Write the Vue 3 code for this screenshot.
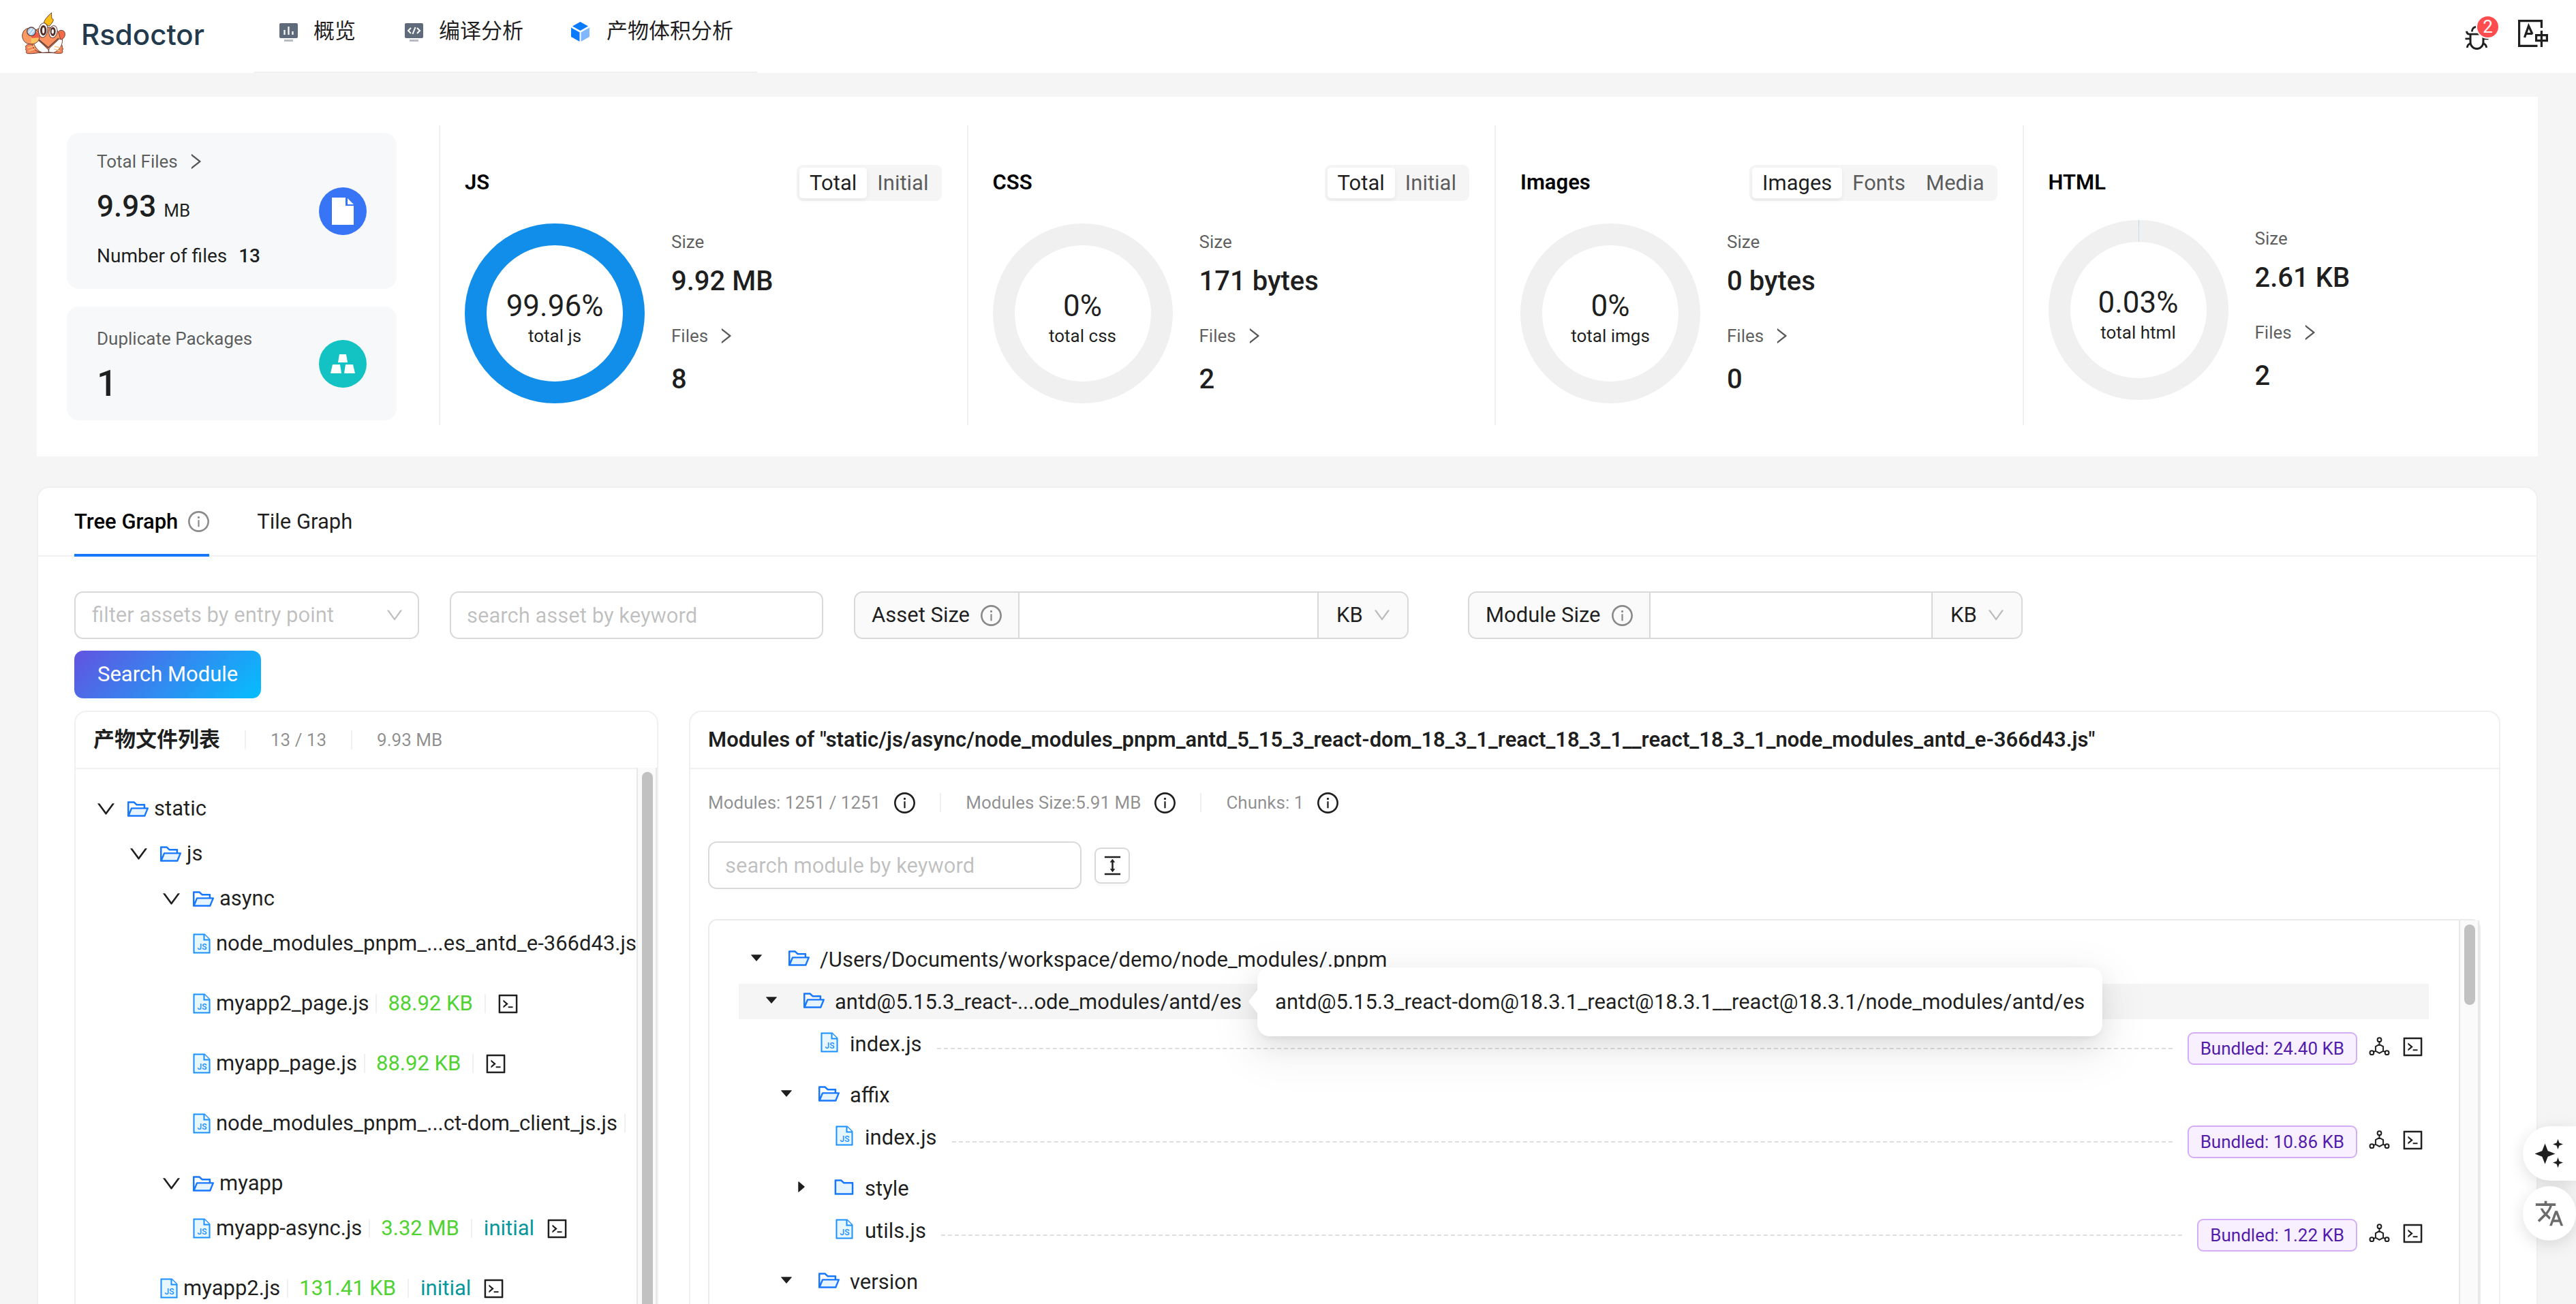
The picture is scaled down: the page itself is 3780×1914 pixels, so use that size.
<script setup>
import { h, ref } from 'vue'

const iconPaths = {
  down: ['M884 256h-75c-5.1 0-9.9 2.5-12.9 6.6L512 654.2 227.9 262.6c-3-4.1-7.8-6.6-12.9-6.6h-75c-6.5 0-10.3 7.4-6.5 12.7l352.6 486.1c12.8 17.6 39 17.6 51.7 0l352.6-486.1c3.9-5.3.1-12.7-6.4-12.7z'],
  right: ['M765.7 486.8L314.9 134.7A7.97 7.97 0 00302 141v77.3c0 4.9 2.3 9.6 6.1 12.6l360 281.1-360 281.1c-3.9 3-6.1 7.7-6.1 12.6V883c0 6.7 7.7 10.4 12.9 6.3l450.8-352.1a31.96 31.96 0 000-50.4z'],
  info: [
    'M512 64C264.6 64 64 264.6 64 512s200.6 448 448 448 448-200.6 448-448S759.4 64 512 64zm0 820c-205.4 0-372-166.6-372-372s166.6-372 372-372 372 166.6 372 372-166.6 372-372 372z',
    'M464 336a48 48 0 1096 0 48 48 0 10-96 0zm72 112h-48c-4.4 0-8 3.6-8 8v272c0 4.4 3.6 8 8 8h48c4.4 0 8-3.6 8-8V456c0-4.4-3.6-8-8-8z'
  ],
  caretDown: ['M840.4 300H183.6c-19.7 0-30.7 20.8-18.5 35l328.4 380.8c9.4 10.9 27.5 10.9 37 0L858.9 335c12.2-14.2 1.2-35-18.5-35z'],
  caretRight: ['M715.8 493.5L335 165.1c-14.2-12.2-35-1.2-35 18.5v656.8c0 19.7 20.8 30.7 35 18.5l380.8-328.4c10.9-9.4 10.9-27.6 0-37z'],
  code: ['M516 673c0 4.4 3.4 8 7.5 8h185c4.1 0 7.5-3.6 7.5-8v-48c0-4.4-3.4-8-7.5-8h-185c-4.1 0-7.5 3.6-7.5 8v48zm-194.9 6.1l192-161c3.8-3.2 3.8-9.1 0-12.3l-192-160.9A7.95 7.95 0 00308 351v62.7c0 2.4 1 4.6 2.9 6.1L420.7 512l-109.8 92.2a8.1 8.1 0 00-2.9 6.1V673c0 6.8 7.9 10.5 13.1 6.1zM880 112H144c-17.7 0-32 14.3-32 32v736c0 17.7 14.3 32 32 32h736c17.7 0 32-14.3 32-32V144c0-17.7-14.3-32-32-32zm-40 728H184V184h656v656z'],
  columnHeight: ['M840 836H184c-4.4 0-8 3.6-8 8v60c0 4.4 3.6 8 8 8h656c4.4 0 8-3.6 8-8v-60c0-4.4-3.6-8-8-8zm0-724H184c-4.4 0-8 3.6-8 8v60c0 4.4 3.6 8 8 8h656c4.4 0 8-3.6 8-8v-60c0-4.4-3.6-8-8-8zM610.8 378c6 0 9.4-7 5.7-11.7L515.7 238.7a7.14 7.14 0 00-11.3 0L403.6 366.3a7.23 7.23 0 005.7 11.7H476v268h-62.8c-6 0-9.4 7-5.7 11.7l100.8 127.5c2.9 3.7 8.5 3.7 11.3 0l100.8-127.5c3.7-4.7.4-11.7-5.7-11.7H548V378h62.8z'],
  bug: [
    'M304 280h56c4.4 0 8-3.6 8-8 0-28.3 5.9-53.2 17.1-73.5 10.6-19.4 26-34.8 45.4-45.4C450.9 142 475.7 136 504 136h16c28.3 0 53.2 5.9 73.5 17.1 19.4 10.6 34.8 26 45.4 45.4C650 218.9 656 243.7 656 272c0 4.4 3.6 8 8 8h56c4.4 0 8-3.6 8-8 0-40-8.8-76.7-25.9-108.1a184.31 184.31 0 00-74-74C596.7 72.8 560 64 520 64h-16c-40 0-76.7 8.8-108.1 25.9a184.31 184.31 0 00-74 74C304.8 195.3 296 232 296 272c0 4.4 3.6 8 8 8z',
    'M940 512H792V412c76.8 0 139-62.2 139-139 0-4.4-3.6-8-8-8h-60c-4.4 0-8 3.6-8 8a63 63 0 01-63 63H232a63 63 0 01-63-63c0-4.4-3.6-8-8-8h-60c-4.4 0-8 3.6-8 8 0 76.8 62.2 139 139 139v100H84c-4.4 0-8 3.6-8 8v56c0 4.4 3.6 8 8 8h148v96c0 6.5.2 13 .7 19.3C164.1 728.6 116 796.7 116 876c0 4.4 3.6 8 8 8h56c4.4 0 8-3.6 8-8 0-44.2 23.9-82.9 59.6-103.7a273 273 0 0022.7 49c24.3 41.5 59 76.2 100.5 100.5S460.5 960 512 960s99.8-13.9 141.3-38.2a281.38 281.38 0 00123.2-149.5A120 120 0 01836 876c0 4.4 3.6 8 8 8h56c4.4 0 8-3.6 8-8 0-79.3-48.1-147.4-116.7-176.7.4-6.4.7-12.8.7-19.3v-96h148c4.4 0 8-3.6 8-8v-56c0-4.4-3.6-8-8-8zM716 680c0 36.8-9.7 72-27.8 102.9-17.7 30.3-43 55.6-73.3 73.3C584 874.3 548.8 884 512 884s-72-9.7-102.9-27.8c-30.3-17.7-55.6-43-73.3-73.3A202.75 202.75 0 01308 680V412h408v268z'
  ]
}

const Icon = (props) =>
  h(
    'svg',
    { viewBox: '64 64 896 896', width: props.size, height: props.size, fill: 'currentColor', 'aria-hidden': 'true', style: { display: 'block', flex: 'none' } },
    iconPaths[props.name].map((d) => h('path', { d }))
  )
Icon.props = ['name', 'size']

const FolderIcon = (props) =>
  h(
    'svg',
    { viewBox: '64 64 896 896', width: 31, height: 31, 'aria-hidden': 'true', style: { display: 'block', flex: 'none' } },
    props.open
      ? [
          h('path', { fill: '#e6f4ff', d: 'M159 768h612.3l103.4-256H262.3z' }),
          h('path', { fill: '#1677ff', d: 'M928 444H820V330.4c0-17.7-14.3-32-32-32H473L355.7 186.2a8.15 8.15 0 00-5.5-2.2H96c-17.7 0-32 14.3-32 32v592c0 17.7 14.3 32 32 32h698c13 0 24.8-7.9 29.7-20l134-332c1.5-3.8 2.3-7.9 2.3-12 0-17.7-14.3-32-32-32zM136 256h188.5l119.6 114.4H748V444H238c-13 0-24.8 7.9-29.7 20L136 643.2V256zm635.3 512H159l103.4-256h612.4L771.3 768z' })
        ]
      : [
          h('path', { fill: '#e6f4ff', d: 'M372.5 256H184v512h656V370.4H492.1z' }),
          h('path', { fill: '#1677ff', d: 'M880 298.4H521L403.7 186.2a8.15 8.15 0 00-5.5-2.2H144c-17.7 0-32 14.3-32 32v592c0 17.7 14.3 32 32 32h736c17.7 0 32-14.3 32-32V330.4c0-17.7-14.3-32-32-32zM840 768H184V256h188.5l119.6 114.4H840V768z' })
        ]
  )
FolderIcon.props = ['open']

const JsIcon = () =>
  h('svg', { viewBox: '0 0 26 30', width: 26, height: 30, 'aria-hidden': 'true', style: { display: 'block', flex: 'none' } }, [
    h('path', { d: 'M1.5 1.5h15.5l7.5 7.5v19.5h-23z', fill: '#e6f7ff', stroke: '#1890ff', 'stroke-width': 2 }),
    h('path', { d: 'M16.5 1.5v8h8', fill: '#fff', stroke: '#1890ff', 'stroke-width': 2 }),
    h('text', { x: 13.5, y: 24, 'text-anchor': 'middle', 'font-size': 12, 'font-weight': 500, 'font-family': 'Roboto, sans-serif', fill: '#1890ff' }, 'JS')
  ])

const ModuleIcon = () =>
  h('svg', { viewBox: '0 0 31 31', width: 31, height: 31, fill: 'none', stroke: 'currentColor', 'stroke-width': 2, 'aria-hidden': 'true', style: { display: 'block', flex: 'none' } }, [
    h('path', { d: 'M15.5 12l5.6 3.2v6.4l-5.6 3.2-5.6-3.2v-6.4zM15.5 12V8M9.9 21.6l-3.2 1.6M21.1 21.6l3.2 1.6' }),
    h('circle', { cx: 15.5, cy: 5.2, r: 2.9 }),
    h('circle', { cx: 4.4, cy: 24.2, r: 2.9 }),
    h('circle', { cx: 26.6, cy: 24.2, r: 2.9 })
  ])

const stats = ref([
  { title: 'JS', tabs: ['Total', 'Initial'], active: 'Total', percent: 99.96, label: 'total js', size: '9.92 MB', files: 8 },
  { title: 'CSS', tabs: ['Total', 'Initial'], active: 'Total', percent: 0, label: 'total css', size: '171 bytes', files: 2 },
  { title: 'Images', tabs: ['Images', 'Fonts', 'Media'], active: 'Images', percent: 0, label: 'total imgs', size: '0 bytes', files: 0 },
  { title: 'HTML', tabs: [], active: '', percent: 0.03, label: 'total html', size: '2.61 KB', files: 2 }
])

const sizeFilters = [
  { id: 'asset-size', label: 'Asset Size' },
  { id: 'module-size', label: 'Module Size' }
]

const assets = [
  { level: 0, name: 'static', folder: true },
  { level: 1, name: 'js', folder: true },
  { level: 2, name: 'async', folder: true },
  { level: 2, name: 'node_modules_pnpm_...es_antd_e-366d43.js' },
  { level: 2, name: 'myapp2_page.js', size: '88.92 KB' },
  { level: 2, name: 'myapp_page.js', size: '88.92 KB' },
  { level: 2, name: 'node_modules_pnpm_...ct-dom_client_js.js', cut: true },
  { level: 2, name: 'myapp', folder: true },
  { level: 2, name: 'myapp-async.js', size: '3.32 MB', initial: true },
  { level: 1, name: 'myapp2.js', size: '131.41 KB', initial: true }
]

const modules = [
  { level: 0, name: '/Users/Documents/workspace/demo/node_modules/.pnpm', folder: true, open: true },
  { level: 1, name: 'antd@5.15.3_react-...ode_modules/antd/es', folder: true, open: true, hover: true, tip: 'antd@5.15.3_react-dom@18.3.1_react@18.3.1__react@18.3.1/node_modules/antd/es' },
  { level: 2, name: 'index.js', size: '24.40 KB' },
  { level: 2, name: 'affix', folder: true, open: true },
  { level: 3, name: 'index.js', size: '10.86 KB' },
  { level: 3, name: 'style', folder: true, open: false },
  { level: 3, name: 'utils.js', size: '1.22 KB' },
  { level: 2, name: 'version', folder: true, open: true }
]

const circumference = 2 * Math.PI * 116
const arc = (p) => `${(circumference * p) / 100} ${circumference}`
</script>

<template>
  <div class="page">
    <header class="topbar">
      <a class="brand" href="#">
        <svg class="crab" viewBox="30 20 204 195" width="68" height="65" aria-hidden="true">
          <g stroke="#6b4038" stroke-width="3" stroke-linejoin="round">
            <path d="M66 166c-12 3-17 14-11 17-5 5-2 11 3 12-6 6-2 13 4 13 22 2 42-4 60-4h40c15 0 34 6 50 2 5-2 5-8 1-12 5-3 6-9 1-13 4-6-3-14-12-16z" fill="#f58458" />
            <path d="M133 76c0-14 14-30 34-48-1 13 0 22 2 27 4 1 7 2 6 5-1 10-12 18-17 27z" fill="#fbbf16" />
            <path d="M85 120c10-28 75-42 110-10 22 22 18 64-6 86-24 12-76 10-92-2-20-18-22-50-12-74z" fill="#f9905d" />
            <path d="M88 162c8 22 22 36 38 42l30-2-4-12-42-40zM214 144c4 26-14 52-38 60l-22-2 2-16 44-42z" fill="#fff" />
            <path d="M102 140l50 42 46-42" fill="none" stroke-width="5" />
            <ellipse cx="130" cy="105" rx="20" ry="32" fill="#fff" transform="rotate(8 130 105)" />
            <ellipse cx="131" cy="106" rx="14" ry="23" fill="#57302b" stroke="none" />
            <ellipse cx="131" cy="106" rx="5" ry="13" fill="#fff" stroke="none" />
            <ellipse cx="174" cy="112" rx="18" ry="27" fill="#fff" transform="rotate(10 174 112)" />
            <ellipse cx="173" cy="111" rx="12" ry="20" fill="#57302b" stroke="none" />
            <ellipse cx="172" cy="111" rx="5" ry="10" fill="#fff" stroke="none" />
            <path d="M196 112c8-12 30-7 30 8 2 12-8 26-18 26-4-6-6-14-6-20z" fill="#f36c49" />
            <path d="M38 128c2-22 18-34 36-32 26 0 40 18 40 38s-16 32-38 32-38-14-38-38z" fill="#fa9a62" />
            <path d="M76 140l34-10c2 20-12 34-32 34z" fill="#fbc45f" stroke="none" />
            <path d="M78 132c4-16 22-24 32-12l4 18-34 2z" fill="#ee5d4a" stroke="none" />
            <circle cx="78" cy="111" r="19" fill="#a9d1f5" stroke-width="4" />
          </g>
          <path d="M66 116l14-18M74 124l18-22" stroke="#e6f4ff" stroke-width="5" />
          <path d="M62 182l30-8M66 197l28-10M206 182l-26-6M204 196l-26-8" stroke="#fcc98a" stroke-width="4" />
        </svg>
        <span class="wordmark">Rsdoctor</span>
      </a>
      <nav class="menu">
        <a class="menu-item" href="#">
          <svg viewBox="0 0 31 31" width="31" height="31" aria-hidden="true">
            <rect x="2" y="3" width="27" height="22" rx="2" fill="#5f6b7a" />
            <path d="M9.500 13v7M15.500 8v12M21.500 15v5" stroke="#fff" stroke-width="2.200" />
            <rect x="9" y="27" width="13" height="3" fill="#b6bbc2" />
          </svg>
          概览
        </a>
        <a class="menu-item" href="#">
          <svg viewBox="0 0 31 31" width="31" height="31" aria-hidden="true">
            <rect x="2" y="3" width="27" height="22" rx="2" fill="#5f6b7a" />
            <path d="M11 10l-4 4 4 4M20 10l4 4-4 4M17.500 9l-4 10" stroke="#fff" stroke-width="2" fill="none" />
            <rect x="9" y="27" width="13" height="3" fill="#b6bbc2" />
          </svg>
          编译分析
        </a>
        <a class="menu-item" href="#">
          <svg viewBox="0 0 31 31" width="31" height="31" aria-hidden="true">
            <path d="M13.500 1l11.500 6.500-11.500 6.500L2 7.500z" fill="#0a7bff" />
            <path d="M0 9.500l12.500 7V30L0 23z" fill="#0a7bff" />
            <path d="M27 9.500l-12.500 7V30L27 23z" fill="#80b8ff" />
          </svg>
          产物体积分析
        </a>
      </nav>
      <div class="tools">
        <button class="icon-btn bug" aria-label="Alerts">
          <Icon name="bug" size="35" />
          <span class="badge">2</span>
        </button>
        <button class="icon-btn" aria-label="Language">
          <svg viewBox="0 0 44 40" width="44" height="40" fill="none" stroke="currentColor" stroke-width="3.200" aria-hidden="true">
            <path d="M34.400 12V1.600H1.600v36.800H28.500" />
            <path d="M9.500 26L15.500 9l5.500 12M11.500 20.500H21" />
            <path d="M26.600 22.600h15.800v8H26.600zM34.400 16v24" />
          </svg>
        </button>
      </div>
    </header>

    <main class="content">
      <section class="overview">
        <div class="summary">
          <div class="tile">
            <div class="tile-text">
              <button class="more">Total Files <Icon name="right" size="26" /></button>
              <p class="total">9.93 <small>MB</small></p>
              <p class="count">Number of files <b>13</b></p>
            </div>
            <span class="disc blue">
              <svg viewBox="0 0 34 40" width="34" height="40" aria-hidden="true">
                <path d="M1 0h20v12h12v28H1zM24 1l9 9h-9z" fill="#fff" />
              </svg>
            </span>
          </div>
          <div class="tile dup">
            <div>
              <p class="muted">Duplicate Packages</p>
              <p class="dup-count">1</p>
            </div>
            <span class="disc teal">
              <svg viewBox="0 0 36 28" width="36" height="28" aria-hidden="true">
                <path d="M13 0h10l2 12H11zM3 15h11l2 13H0zM22 15h11l3 13H20z" fill="#fff" />
              </svg>
            </span>
          </div>
        </div>

        <article v-for="s in stats" :key="s.title" class="stat">
          <div class="stat-head" :class="{ plain: !s.tabs.length }">
            <h2>{{ s.title }}</h2>
            <div v-if="s.tabs.length" class="segment">
              <button v-for="t in s.tabs" :key="t" :class="{ on: t === s.active }" @click="s.active = t">{{ t }}</button>
            </div>
          </div>
          <div class="stat-body">
            <div class="donut">
              <svg viewBox="0 0 264 264" width="264" height="264" aria-hidden="true">
                <circle cx="132" cy="132" r="116" fill="none" stroke="#f0f0f0" stroke-width="32" />
                <circle v-if="s.percent > 1" cx="132" cy="132" r="116" fill="none" stroke="#108ee9" stroke-width="32" />
                <circle v-else-if="s.percent" cx="132" cy="132" r="116" fill="none" stroke="#108ee9" stroke-width="32" :stroke-dasharray="arc(s.percent)" transform="rotate(-90 132 132)" />
              </svg>
              <div class="donut-text">
                <strong>{{ s.percent }}%</strong>
                <span>{{ s.label }}</span>
              </div>
            </div>
            <div class="figures">
              <p class="muted">Size</p>
              <p class="figure">{{ s.size }}</p>
              <button class="more files">Files <Icon name="right" size="26" /></button>
              <p class="figure">{{ s.files }}</p>
            </div>
          </div>
        </article>
      </section>

      <section class="graph">
        <div class="tabs" role="tablist">
          <button class="tab active" role="tab">Tree Graph <Icon class="soft" name="info" size="31" /></button>
          <button class="tab" role="tab">Tile Graph</button>
        </div>

        <div class="graph-body">
          <div class="filters">
            <div class="picker">
              <select aria-label="filter assets by entry point">
                <option>filter assets by entry point</option>
              </select>
              <Icon class="arrow" name="down" size="26" />
            </div>
            <input class="box keyword" type="text" placeholder="search asset by keyword" aria-label="search asset by keyword" />
            <div v-for="f in sizeFilters" :key="f.id" class="group" :class="f.id">
              <label :for="f.id">{{ f.label }} <Icon class="soft" name="info" size="31" /></label>
              <input :id="f.id" type="text" />
              <div class="unit">
                <select :aria-label="f.label + ' unit'">
                  <option>KB</option>
                  <option>MB</option>
                </select>
                <Icon class="arrow" name="down" size="26" />
              </div>
            </div>
          </div>
          <button class="primary">Search Module</button>

          <div class="panels">
            <section class="panel">
              <header class="panel-head">
                <h3>产物文件列表</h3>
                <i class="rule"></i>
                <span class="meta">13 / 13</span>
                <i class="rule"></i>
                <span class="meta">9.93 MB</span>
              </header>
              <div class="assets">
                <ul class="asset-list">
                  <li v-for="a in assets" :key="a.name" class="asset" :class="{ folder: a.folder }">
                    <div class="asset-line" :style="{ paddingLeft: a.level * 48 + 'px' }">
                      <template v-if="a.folder">
                        <button class="icon-btn toggle" aria-label="Collapse"><Icon name="down" size="29" /></button>
                        <FolderIcon :open="true" />
                        <span class="name">{{ a.name }}</span>
                      </template>
                      <template v-else>
                        <span class="spacer"></span>
                        <JsIcon />
                        <span class="name">{{ a.name }}</span>
                        <i v-if="a.size || a.cut" class="rule near"></i>
                        <template v-if="a.size">
                          <span class="size">{{ a.size }}</span>
                          <i class="rule tight"></i>
                          <span v-if="a.initial" class="initial">initial</span>
                          <button class="icon-btn" aria-label="Open source"><Icon name="code" size="31" /></button>
                        </template>
                      </template>
                    </div>
                  </li>
                </ul>
                <div class="track over"><div class="thumb long"></div></div>
              </div>
            </section>

            <section class="panel">
              <header class="panel-head">
                <h3>Modules of "static/js/async/node_modules_pnpm_antd_5_15_3_react-dom_18_3_1_react_18_3_1__react_18_3_1_node_modules_antd_e-366d43.js"</h3>
              </header>
              <div class="modules">
                <div class="facts">
                  <span class="meta">Modules: 1251 / 1251</span><Icon name="info" size="31" />
                  <i class="rule"></i>
                  <span class="meta">Modules Size:5.91 MB</span><Icon name="info" size="31" />
                  <i class="rule"></i>
                  <span class="meta">Chunks: 1</span><Icon name="info" size="31" />
                </div>
                <div class="search">
                  <input class="box keyword" type="text" placeholder="search module by keyword" aria-label="search module by keyword" />
                  <button class="small" aria-label="Expand all"><Icon name="columnHeight" size="31" /></button>
                </div>
                <div class="tree-card">
                  <ul class="tree">
                    <li v-for="(m, i) in modules" :key="i" class="node" :class="{ file: !m.folder, hover: m.hover }">
                      <div class="node-name" :style="{ paddingLeft: 15 + m.level * 22 + 'px' }">
                        <button v-if="m.folder" class="icon-btn caret" aria-label="Toggle"><Icon :name="m.open ? 'caretDown' : 'caretRight'" size="20" /></button>
                        <span v-else class="caret"></span>
                        <span class="glyph"><FolderIcon v-if="m.folder" :open="m.open" /><JsIcon v-else /></span>
                        <span class="name">{{ m.name }}</span>
                        <div v-if="m.tip" class="tip" role="tooltip">{{ m.tip }}</div>
                      </div>
                      <template v-if="m.size">
                        <i class="dash"></i>
                        <span class="tag">Bundled: {{ m.size }}</span>
                        <span class="actions">
                          <button class="icon-btn" aria-label="Module dependencies"><ModuleIcon /></button>
                          <button class="icon-btn" aria-label="Open source"><Icon name="code" size="31" /></button>
                        </span>
                      </template>
                    </li>
                  </ul>
                  <div class="track"><div class="thumb"></div></div>
                </div>
              </div>
            </section>
          </div>
        </div>
      </section>
    </main>

    <div class="floats">
      <button class="float half" aria-label="Assistant">
        <svg viewBox="0 0 42 42" width="42" height="42" fill="#1f1f1f" aria-hidden="true">
          <path d="M15.500 6.500l4.200 10.800 10.800 4.200-10.800 4.200-4.200 10.800-4.200-10.800L.5 21.500l10.800-4.200zM34.500 0l2 5.500 5.500 2-5.500 2-2 5.500-2-5.500-5.500-2 5.500-2zM34.500 27l2 5.500 5.500 2-5.500 2-2 5.500-2-5.500-5.500-2 5.500-2z" />
        </svg>
      </button>
      <button class="float" aria-label="Translate">
        <svg viewBox="0 0 24 24" width="44" height="44" fill="#6b6b6b" aria-hidden="true">
          <path d="M12.870 15.070l-2.540-2.510.03-.03c1.740-1.940 2.980-4.170 3.710-6.530H17V4h-7V2H8v2H1v1.990h11.170C11.500 7.920 10.440 9.750 9 11.350 8.070 10.320 7.300 9.190 6.690 8h-2c.73 1.630 1.730 3.170 2.980 4.560l-5.090 5.020L4 19l5-5 3.110 3.110.76-2.040zM18.500 10h-2L12 22h2l1.120-3h4.750L21 22h2l-4.500-12zm-2.620 7l1.620-4.330L19.120 17h-3.240z" />
        </svg>
      </button>
    </div>
  </div>
</template>

<style>
body {
  background: #f5f5f5;
}
</style>

<style scoped>
.page,
.page * {
  box-sizing: border-box;
}
.page {
  display: flex;
  flex-direction: column;
  height: 100vh;
  overflow: hidden;
  background: #f5f5f5;
  color: rgba(0, 0, 0, 0.88);
  font-family: Roboto, 'Noto Sans CJK SC', sans-serif;
  font-size: 31px;
  line-height: 44px;
}
p,
h2,
h3,
ul {
  margin: 0;
  padding: 0;
}
ul {
  list-style: none;
}
button,
input,
select {
  margin: 0;
  font: inherit;
  color: inherit;
}
button {
  padding: 0;
  border: 0;
  background: none;
  cursor: pointer;
}
svg {
  display: block;
  flex: none;
}
a {
  color: inherit;
  text-decoration: none;
}
.icon-btn {
  display: flex;
  flex: none;
}
.soft {
  color: rgba(0, 0, 0, 0.45);
}

/* top bar */
.topbar {
  display: flex;
  flex: none;
  height: 107px;
  padding: 0 41px 0 30px;
  background: #fff;
}
.brand {
  display: flex;
  align-items: center;
  width: 343px;
  height: 96px;
  gap: 21px;
}
.wordmark {
  color: #233a4d;
  font-family: Inter, sans-serif;
  font-size: 42px;
  font-weight: 500;
  line-height: 52px;
  padding-top: 6px;
}
.menu {
  display: flex;
  border-bottom: 2px solid #f0f0f0;
}
.menu-item {
  display: flex;
  align-items: center;
  gap: 21px;
  height: 92px;
  padding: 0 35px;
}
.tools {
  display: flex;
  align-items: center;
  gap: 43px;
  height: 98px;
  margin-left: auto;
}
.bug {
  position: relative;
  margin-top: 12px;
}
.badge {
  position: absolute;
  top: -14px;
  right: -14px;
  width: 31px;
  height: 31px;
  border-radius: 50%;
  background: #ff4d4f;
  box-shadow: 0 0 0 2px #fff;
  color: #fff;
  font-size: 26px;
  line-height: 31px;
  text-align: center;
}

/* overview */
.content {
  display: flex;
  flex: 1;
  flex-direction: column;
  gap: 44px;
  min-height: 0;
  padding: 35px 56px 0 54px;
}
.overview {
  display: grid;
  flex: none;
  grid-template-columns: 590px repeat(3, 774fr) 756fr;
  padding: 42px 0 46px;
  background: #fff;
}
.summary {
  display: flex;
  flex-direction: column;
  gap: 26px;
  height: 440px;
  padding: 11px 62px 0 44px;
}
.tile {
  display: flex;
  align-items: center;
  justify-content: space-between;
  height: 229px;
  padding: 0 44px;
  border-radius: 18px;
  background: #f7f8fa;
}
.tile-text {
  padding-bottom: 8px;
}
.tile.dup {
  height: 167px;
}
.more {
  display: flex;
  align-items: center;
  gap: 13px;
  color: rgba(0, 0, 0, 0.65);
  font-size: 26px;
  line-height: 44px;
}
.total {
  margin: 14px 0 17px;
  font-size: 44px;
  font-weight: 500;
  line-height: 60px;
}
.total small {
  font-size: 26px;
  font-weight: 400;
}
.count {
  font-size: 28px;
  line-height: 40px;
}
.count b {
  margin-left: 10px;
  font-weight: 500;
}
.muted {
  color: rgba(0, 0, 0, 0.65);
  font-size: 26px;
}
.dup-count {
  margin-top: 14px;
  font-size: 53px;
  font-weight: 500;
  line-height: 60px;
}
.disc {
  display: flex;
  flex: none;
  align-items: center;
  justify-content: center;
  width: 70px;
  height: 70px;
  border-radius: 50%;
}
.blue {
  background: #3874f6;
}
.teal {
  background: #13c2c2;
}
.stat {
  padding: 58px 37px 0 36px;
  border-left: 2px solid #f0f0f0;
}
.stat-head {
  display: flex;
  align-items: center;
  justify-content: space-between;
  height: 53px;
  margin-bottom: 33px;
}
.stat-head.plain {
  margin-bottom: 28px;
}
.stat-head h2 {
  padding-bottom: 2px;
  color: #000;
  font-size: 31px;
  font-weight: 600;
}
.segment {
  display: flex;
  padding: 4px;
  border-radius: 9px;
  background: #f5f5f5;
}
.segment button {
  padding: 0 15px;
  border-radius: 5px;
  color: rgba(0, 0, 0, 0.65);
  line-height: 45px;
}
.segment .on {
  background: #fff;
  box-shadow: 0 3px 6px rgba(0, 0, 0, 0.06);
  color: rgba(0, 0, 0, 0.88);
}
.stat-body {
  display: flex;
  gap: 39px;
}
.donut {
  position: relative;
}
.donut-text {
  position: absolute;
  inset: 0;
  display: flex;
  flex-direction: column;
  align-items: center;
  justify-content: center;
  padding-top: 14px;
}
.donut-text strong {
  font-size: 44px;
  font-weight: 400;
  line-height: 52px;
}
.donut-text span {
  font-size: 26px;
  line-height: 36px;
}
.figures {
  padding-top: 5px;
}
.figure {
  margin-top: 6px;
  font-size: 40px;
  font-weight: 500;
  line-height: 60px;
}
.files {
  margin-top: 28px;
}
.files + .figure {
  margin-top: 12px;
}

/* graph card */
.graph {
  display: flex;
  flex: 1;
  flex-direction: column;
  min-height: 0;
  border: 2px solid #f0f0f0;
  border-bottom: 0;
  border-radius: 18px 18px 0 0;
  background: #fff;
}
.tabs {
  display: flex;
  flex: none;
  gap: 70px;
  padding: 0 53px;
  border-bottom: 2px solid #f0f0f0;
}
.tab {
  display: flex;
  align-items: center;
  gap: 15px;
  height: 101px;
  margin-bottom: -2px;
  padding-bottom: 2px;
}
.tab.active {
  padding: 4px 0 2px;
  border-bottom: 4px solid #1677ff;
  color: #000;
  font-weight: 500;
}
.graph-body {
  display: flex;
  flex: 1;
  flex-direction: column;
  align-items: stretch;
  min-height: 0;
  padding: 51px 53px 0;
}
.filters {
  display: flex;
  flex: none;
  gap: 45px;
  margin-bottom: 17px;
}
.picker,
.unit {
  position: relative;
  flex: none;
}
.picker select {
  width: 506px;
  height: 70px;
  padding: 0 60px 0 24px;
  border: 2px solid #d9d9d9;
  border-radius: 13px;
  appearance: none;
  background: #fff;
  color: rgba(0, 0, 0, 0.25);
}
.arrow {
  position: absolute;
  top: 22px;
  right: 23px;
  color: rgba(0, 0, 0, 0.25);
  pointer-events: none;
}
.box {
  width: 548px;
  height: 70px;
  padding: 0 23px;
  border: 2px solid #d9d9d9;
  border-radius: 13px;
  background: #fff;
}
input::placeholder {
  color: rgba(0, 0, 0, 0.25);
  opacity: 1;
}
.group {
  display: flex;
  width: 814px;
  height: 70px;
  border: 2px solid #d9d9d9;
  border-radius: 13px;
  background: #fafafa;
}
.module-size {
  margin-left: 42px;
}
.group label {
  display: flex;
  flex: none;
  align-items: center;
  gap: 16px;
  padding: 0 24px;
}
.group input {
  flex: 1;
  min-width: 0;
  padding: 0 24px;
  border: 2px solid #d9d9d9;
  border-width: 0 2px;
  background: #fff;
}
.unit select {
  width: 130px;
  height: 66px;
  padding: 0 26px;
  border: 0;
  border-radius: 0 11px 11px 0;
  appearance: none;
  background: transparent;
}
.unit .arrow {
  top: 20px;
  right: 24px;
}
.primary {
  flex: none;
  align-self: flex-start;
  height: 70px;
  margin-bottom: 18px;
  padding: 0 34px;
  border-radius: 13px;
  background: linear-gradient(135deg, #6253e1, #04befe);
  box-shadow: 0 4px 0 rgba(5, 145, 255, 0.04);
  color: #fff;
}

/* panels */
.panels {
  display: grid;
  flex: 1;
  grid-template-columns: 857fr 2658fr;
  gap: 45px;
  min-height: 0;
}
.panel {
  display: flex;
  flex-direction: column;
  min-width: 0;
  min-height: 0;
  border: 2px solid #f0f0f0;
  border-bottom: 0;
  border-radius: 18px 18px 0 0;
}
.panel-head {
  display: flex;
  flex: none;
  align-items: center;
  height: 84px;
  padding: 0 26px;
  border-bottom: 2px solid #f0f0f0;
  white-space: nowrap;
}
.panel-head h3 {
  font-size: 31px;
  font-weight: 600;
}
.meta {
  color: rgba(0, 0, 0, 0.45);
  font-size: 26px;
}
.rule {
  flex: none;
  width: 2px;
  height: 28px;
  margin: 0 36px;
  background: #f0f0f0;
}
.rule.near {
  margin: 0 16px 0 10px;
}
.rule.tight {
  margin: 0 17px;
}
.assets {
  display: flex;
  flex: 1;
  min-height: 0;
}
.asset-list {
  flex: 1;
  min-width: 0;
  overflow: hidden;
  padding: 25px 0 0 30px;
}
.asset {
  height: 88px;
}
.asset.folder {
  height: 66px;
}
.asset-line {
  display: flex;
  align-items: center;
  height: 66px;
  white-space: nowrap;
}
.toggle {
  margin-right: 17px;
}
.spacer {
  flex: none;
  width: 46px;
}
.asset-line .name {
  margin-left: 8px;
}
.size {
  color: #4fd232;
}
.initial {
  margin-right: 18px;
  color: #08979c;
}
.track {
  flex: none;
  width: 30px;
  padding: 6px 4px 0 6px;
  border: 2px solid #e8e8e8;
  border-width: 0 2px;
  background: #fafafa;
}
.track.over {
  margin-top: -2px;
}
.thumb {
  height: 118px;
  border-radius: 8px;
  background: #c1c1c1;
}
.thumb.long {
  height: 100%;
  border-radius: 8px 8px 0 0;
}
.modules {
  display: flex;
  flex: 1;
  flex-direction: column;
  min-height: 0;
  padding: 27px 27px 0 26px;
}
.facts {
  display: flex;
  flex: none;
  align-items: center;
  height: 44px;
  margin-bottom: 35px;
}
.facts .meta {
  margin-right: 20px;
}
.search {
  display: flex;
  flex: none;
  align-items: center;
  gap: 19px;
  margin-bottom: 44px;
}
.small {
  display: flex;
  align-items: center;
  justify-content: center;
  width: 52px;
  height: 53px;
  border: 2px solid #d9d9d9;
  border-radius: 9px;
  background: #fff;
  box-shadow: 0 4px 0 rgba(0, 0, 0, 0.02);
}
.tree-card {
  display: flex;
  flex: 1;
  min-height: 0;
  border: 2px solid #ebebeb;
  border-bottom: 0;
  border-radius: 13px 13px 0 0;
}
.tree {
  flex: 1;
  min-width: 0;
  padding: 31px 44px 0 43px;
}
.node {
  display: flex;
  align-items: center;
  height: 52px;
  margin-bottom: 10px;
  padding-right: 8px;
}
.node.file {
  height: 65px;
}
.node.hover {
  background: #f5f5f5;
}
.node-name {
  position: relative;
  display: flex;
  align-items: flex-start;
  align-self: flex-start;
  height: 52px;
  white-space: nowrap;
}
.caret {
  flex: none;
  align-items: center;
  justify-content: center;
  width: 22px;
  height: 48px;
  margin-right: 36px;
}
.glyph {
  display: flex;
  align-items: center;
  justify-content: center;
  width: 31px;
  height: 48px;
  margin-right: 15px;
}
.node-name .name {
  line-height: 54px;
}
.dash {
  flex: 1;
  margin: 0 22px;
  border-top: 2px dashed #dedede;
}
.tag {
  height: 48px;
  padding: 0 17px;
  border: 2px solid #d3adf7;
  border-radius: 9px;
  background: #f9f0ff;
  color: #531dab;
  font-size: 26px;
}
.actions {
  display: flex;
  gap: 18px;
  margin-left: 17px;
  padding-bottom: 5px;
}
.tip {
  position: absolute;
  z-index: 2;
  top: -24px;
  left: calc(100% + 23px);
  height: 101px;
  padding: 0 26px;
  border-radius: 18px;
  background: #fff;
  box-shadow: 0 13px 35px rgba(0, 0, 0, 0.08), 0 7px 13px -9px rgba(0, 0, 0, 0.12), 0 20px 62px 18px rgba(0, 0, 0, 0.05);
  line-height: 101px;
}
.tip::before {
  content: '';
  position: absolute;
  top: 33px;
  left: -13px;
  border: solid transparent;
  border-width: 17px 13px 17px 0;
  border-right-color: #fff;
}

/* floating buttons */
.floats {
  position: fixed;
  right: 0;
  bottom: 93px;
  display: flex;
  flex-direction: column;
  gap: 8px;
}
.float {
  display: flex;
  align-items: center;
  width: 78px;
  height: 80px;
  padding-left: 17px;
  border-radius: 40px;
  background: #fff;
  box-shadow: 0 6px 24px rgba(0, 0, 0, 0.12);
}
.float.half {
  border-radius: 40px 0 0 40px;
}
</style>
